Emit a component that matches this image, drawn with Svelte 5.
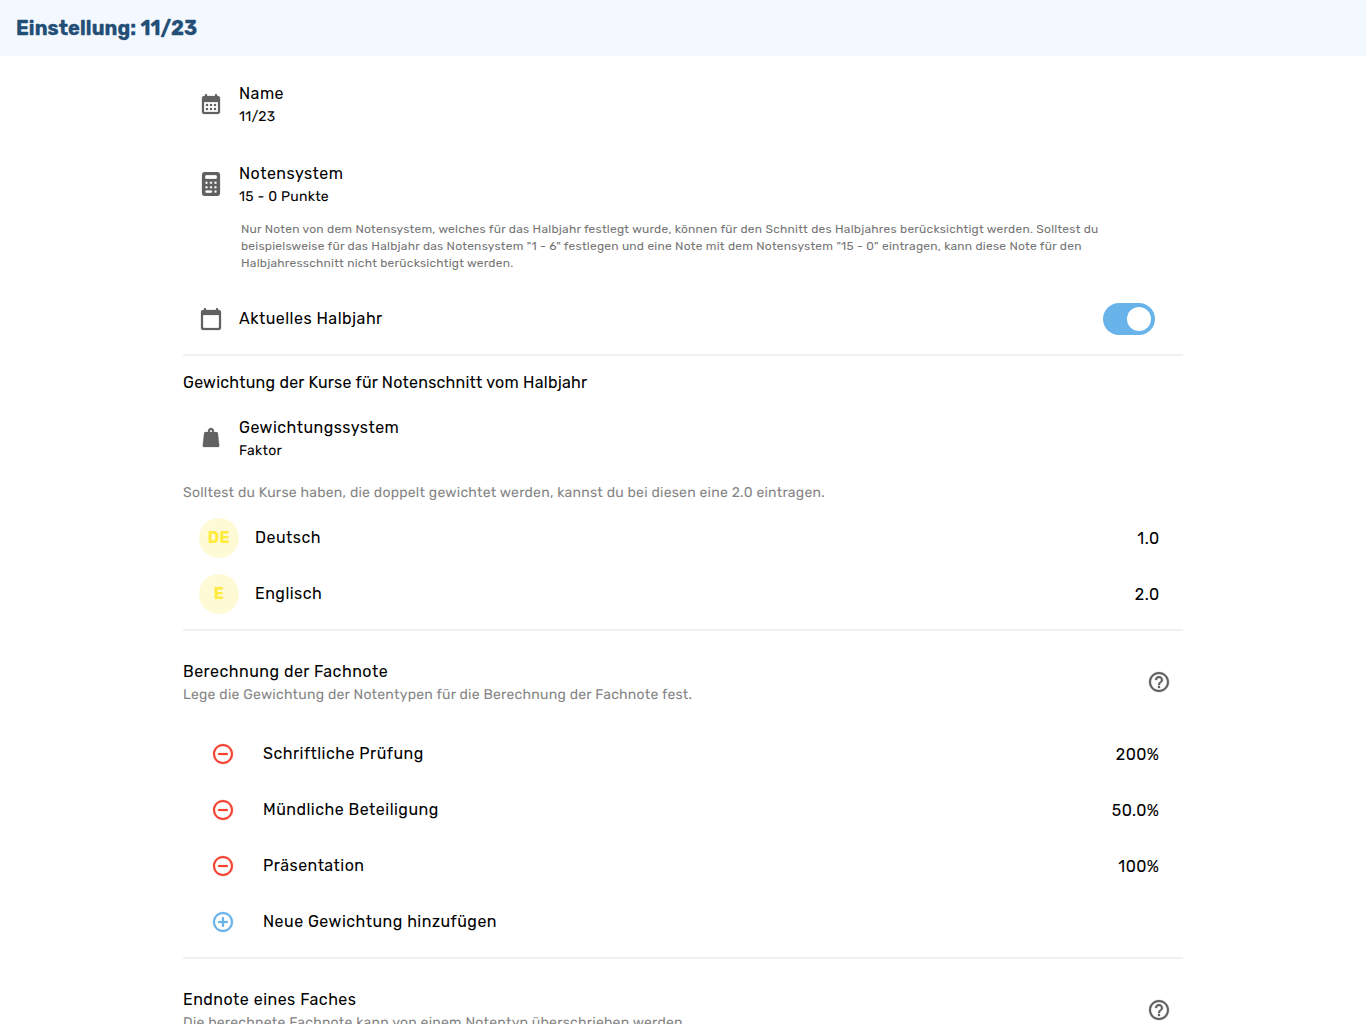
<script>
  const icons = {
    month: 'M19 4h-1V3c0-.55-.45-1-1-1s-1 .45-1 1v1H8V3c0-.55-.45-1-1-1s-1 .45-1 1v1H5c-1.110 0-1.990.9-1.990 2L3 20c0 1.100.89 2 2 2h14c1.100 0 2-.9 2-2V6c0-1.100-.9-2-2-2zm0 16H5V10h14v10zM9 14H7v-2h2v2zm4 0h-2v-2h2v2zm4 0h-2v-2h2v2zm-8 4H7v-2h2v2zm4 0h-2v-2h2v2zm4 0h-2v-2h2v2z',
    today: 'M20 3h-1V2c0-.55-.45-1-1-1s-1 .45-1 1v1H7V2c0-.55-.45-1-1-1s-1 .45-1 1v1H4c-1.100 0-2 .9-2 2v16c0 1.100.9 2 2 2h16c1.100 0 2-.9 2-2V5c0-1.100-.9-2-2-2zm-1 18H5c-.55 0-1-.45-1-1V8h16v12c0 .55-.45 1-1 1z',
    minus: 'M8 11c-.55 0-1 .45-1 1s.45 1 1 1h8c.55 0 1-.45 1-1s-.45-1-1-1H8zm4-9C6.48 2 2 6.48 2 12s4.48 10 10 10 10-4.480 10-10S17.520 2 12 2zm0 18c-4.410 0-8-3.590-8-8s3.590-8 8-8 8 3.590 8 8-3.590 8-8 8z',
    plus: 'M12 7c-.55 0-1 .45-1 1v3H8c-.55 0-1 .45-1 1s.45 1 1 1h3v3c0 .55.45 1 1 1s1-.45 1-1v-3h3c.55 0 1-.45 1-1s-.45-1-1-1h-3V8c0-.55-.45-1-1-1zm0-5C6.48 2 2 6.48 2 12s4.48 10 10 10 10-4.480 10-10S17.520 2 12 2zm0 18c-4.410 0-8-3.590-8-8s3.590-8 8-8 8 3.590 8 8-3.590 8-8 8z',
    help: 'M11 18h2v-2h-2v2zm1-16C6.48 2 2 6.48 2 12s4.48 10 10 10 10-4.48 10-10S17.52 2 12 2zm0 18c-4.41 0-8-3.59-8-8s3.59-8 8-8 8 3.59 8 8-3.59 8-8 8zm0-14c-2.21 0-4 1.79-4 4h2c0-1.1.9-2 2-2s2 .9 2 2c0 2-3 1.75-3 5h2c0-2.25 3-2.5 3-5 0-2.21-1.79-4-4-4z',
    calculator: 'M6 0h12a3 3 0 0 1 3 3v18a3 3 0 0 1-3 3H6a3 3 0 0 1-3-3V3a3 3 0 0 1 3-3zM7.500 3A1.500 1.500 0 0 0 6 4.500v1A1.500 1.500 0 0 0 7.500 7h9A1.500 1.500 0 0 0 18 5.500v-1A1.500 1.500 0 0 0 16.500 3zM7.500 9.500a1.300 1.300 0 1 0 0 2.600 1.300 1.300 0 1 0 0-2.600zM12 9.500a1.300 1.300 0 1 0 0 2.600 1.300 1.300 0 1 0 0-2.600zM16.500 9.500a1.300 1.300 0 1 0 0 2.600 1.300 1.300 0 1 0 0-2.600zM7.500 14a1.300 1.300 0 1 0 0 2.600 1.300 1.300 0 1 0 0-2.600zM12 14a1.300 1.300 0 1 0 0 2.600 1.300 1.300 0 1 0 0-2.600zM16.500 14a1.300 1.300 0 1 0 0 2.600 1.300 1.300 0 1 0 0-2.600zM7.500 18.300a1.300 1.300 0 1 0 0 2.600H12a1.300 1.300 0 1 0 0-2.600zM16.500 18.300a1.300 1.300 0 1 0 0 2.600 1.300 1.300 0 1 0 0-2.600z',
    weight: 'M12 2a3 3 0 0 1 2.800 4.100h2.400c.9 0 1.500.5 1.700 1.300l1.300 12c.1.900-.4 1.600-1.300 1.600H5.100c-.9 0-1.400-.7-1.300-1.600l1.300-12c.2-.8.800-1.300 1.700-1.300h2.400A3 3 0 0 1 12 2zm0 1.900a1.200 1.200 0 1 0 0 2.400 1.200 1.200 0 1 0 0-2.400z'
  };
  const courses = [
    { short: 'DE', name: 'Deutsch', factor: '1.0' },
    { short: 'E', name: 'Englisch', factor: '2.0' }
  ];
  const weights = [
    { name: 'Schriftliche Prüfung', value: '200%' },
    { name: 'Mündliche Beteiligung', value: '50.0%' },
    { name: 'Präsentation', value: '100%' }
  ];
</script>

{#snippet icon(name, tone = '')}
  <svg class="icon {tone}" viewBox="0 0 24 24" aria-hidden="true"><path fill-rule="evenodd" d={icons[name]} /></svg>
{/snippet}

<div class="screen">
  <header><h1>Einstellung: 11/23</h1></header>
  <main>
    <div class="setting">
      {@render icon('month')}
      <div><div class="title">Name</div><div class="value">11/23</div></div>
    </div>
    <div class="setting">
      {@render icon('calculator')}
      <div><div class="title">Notensystem</div><div class="value">15 - 0 Punkte</div></div>
    </div>
    <p class="note">
      Nur Noten von dem Notensystem, welches für das Halbjahr festlegt wurde, können für den Schnitt des Halbjahres berücksichtigt werden. Solltest du<br />
      beispielsweise für das Halbjahr das Notensystem "1 - 6" festlegen und eine Note mit dem Notensystem "15 - 0" eintragen, kann diese Note für den<br />
      Halbjahresschnitt nicht berücksichtigt werden.
    </p>
    <div class="setting current">
      {@render icon('today')}
      <div class="title grow">Aktuelles Halbjahr</div>
      <div class="switch"><div class="knob"></div></div>
    </div>
    <hr />
    <h2>Gewichtung der Kurse für Notenschnitt vom Halbjahr</h2>
    <div class="setting weighting">
      {@render icon('weight')}
      <div><div class="title">Gewichtungssystem</div><div class="value">Faktor</div></div>
    </div>
    <p class="hint">Solltest du Kurse haben, die doppelt gewichtet werden, kannst du bei diesen eine 2.0 eintragen.</p>
    {#each courses as c}
      <div class="row">
        <div class="avatar">{c.short}</div>
        <div class="title grow">{c.name}</div>
        <div class="number">{c.factor}</div>
      </div>
    {/each}
    <hr />
    <div class="section">
      <div class="grow"><div class="title">Berechnung der Fachnote</div><div class="sub">Lege die Gewichtung der Notentypen für die Berechnung der Fachnote fest.</div></div>
      {@render icon('help')}
    </div>
    {#each weights as w}
      <div class="row typed">
        {@render icon('minus', 'red')}
        <div class="title grow">{w.name}</div>
        <div class="number">{w.value}</div>
      </div>
    {/each}
    <div class="row typed">
      {@render icon('plus', 'blue')}
      <div class="title grow">Neue Gewichtung hinzufügen</div>
    </div>
    <hr />
    <div class="section">
      <div class="grow"><div class="title">Endnote eines Faches</div><div class="sub">Die berechnete Fachnote kann von einem Notentyp überschrieben werden.</div></div>
      {@render icon('help')}
    </div>
  </main>
</div>

<style>
  :global(body) { background: #fff; overflow: hidden; }
  .screen { height: 1024px; overflow: hidden; font-family: Rubik, Roboto, sans-serif; color: #000; }
  header { height: 56px; background: #f4f9ff; display: flex; align-items: center; padding-left: 16px; }
  h1 { margin: 0; font-size: 20px; line-height: 24px; font-weight: 700; letter-spacing: .08px; color: #234f76; -webkit-text-stroke: .3px #234f76; }
  main { width: 1000px; margin: 0 auto; padding-top: 8px; }
  .icon { width: 24px; height: 24px; flex: none; fill: #616161; stroke: #616161; stroke-width: .25; display: block; }
  .red { fill: #f44336; stroke: #f44336; }
  .blue { fill: #68b3ea; stroke: #68b3ea; }
  .grow { flex: 1; }
  .title { font-size: 16px; line-height: 24px; letter-spacing: .48px; white-space: nowrap; }
  .value { font-size: 14px; line-height: 20px; letter-spacing: .25px; margin-top: 1px; white-space: nowrap; text-rendering: geometricPrecision; }
  .setting { height: 80px; display: flex; align-items: center; gap: 16px; padding: 0 28px 0 16px; }
  .note { margin: -3px 0 0 58px; font-size: 12px; line-height: 17px; letter-spacing: .23px; color: #757575; white-space: nowrap; }
  .current { height: 56px; margin-top: 19px; }
  .switch { width: 52px; height: 32px; border-radius: 16px; background: #68b3ea; display: flex; align-items: center; justify-content: flex-end; padding-right: 4px; box-sizing: border-box; }
  .knob { width: 24px; height: 24px; border-radius: 50%; background: #fff; }
  hr { margin: 7px 0 0; height: 2px; border: 0; background: #f0f0f0; }
  h2 { margin: 15px 0 0; font-size: 16px; line-height: 24px; font-weight: 400; letter-spacing: .23px; white-space: nowrap; }
  .weighting { height: 72px; margin-top: 7px; }
  .hint { margin: 9px 0 7px; font-size: 14px; line-height: 20px; letter-spacing: .23px; color: #858585; white-space: nowrap; text-rendering: geometricPrecision; }
  .row { display: flex; align-items: center; height: 56px; padding: 0 23.5px 0 16px; gap: 16px; }
  .avatar { width: 40px; height: 40px; border-radius: 50%; display: grid; place-items: center; font-size: 16px; font-weight: 700; letter-spacing: .3px; padding-bottom: 2px; box-sizing: border-box; color: #ffeb3b; background: #fffad6; }
  .number { font-size: 16px; line-height: 24px; letter-spacing: .45px; padding-top: 2px; }
  .typed { padding-left: 28px; gap: 28px; }
  .section { height: 80px; display: flex; align-items: center; padding: 0 12px 0 0; margin: 11px 0 4px; }
  .sub { font-size: 14px; line-height: 20px; letter-spacing: .23px; margin-top: 1px; color: #858585; white-space: nowrap; text-rendering: geometricPrecision; }
</style>
